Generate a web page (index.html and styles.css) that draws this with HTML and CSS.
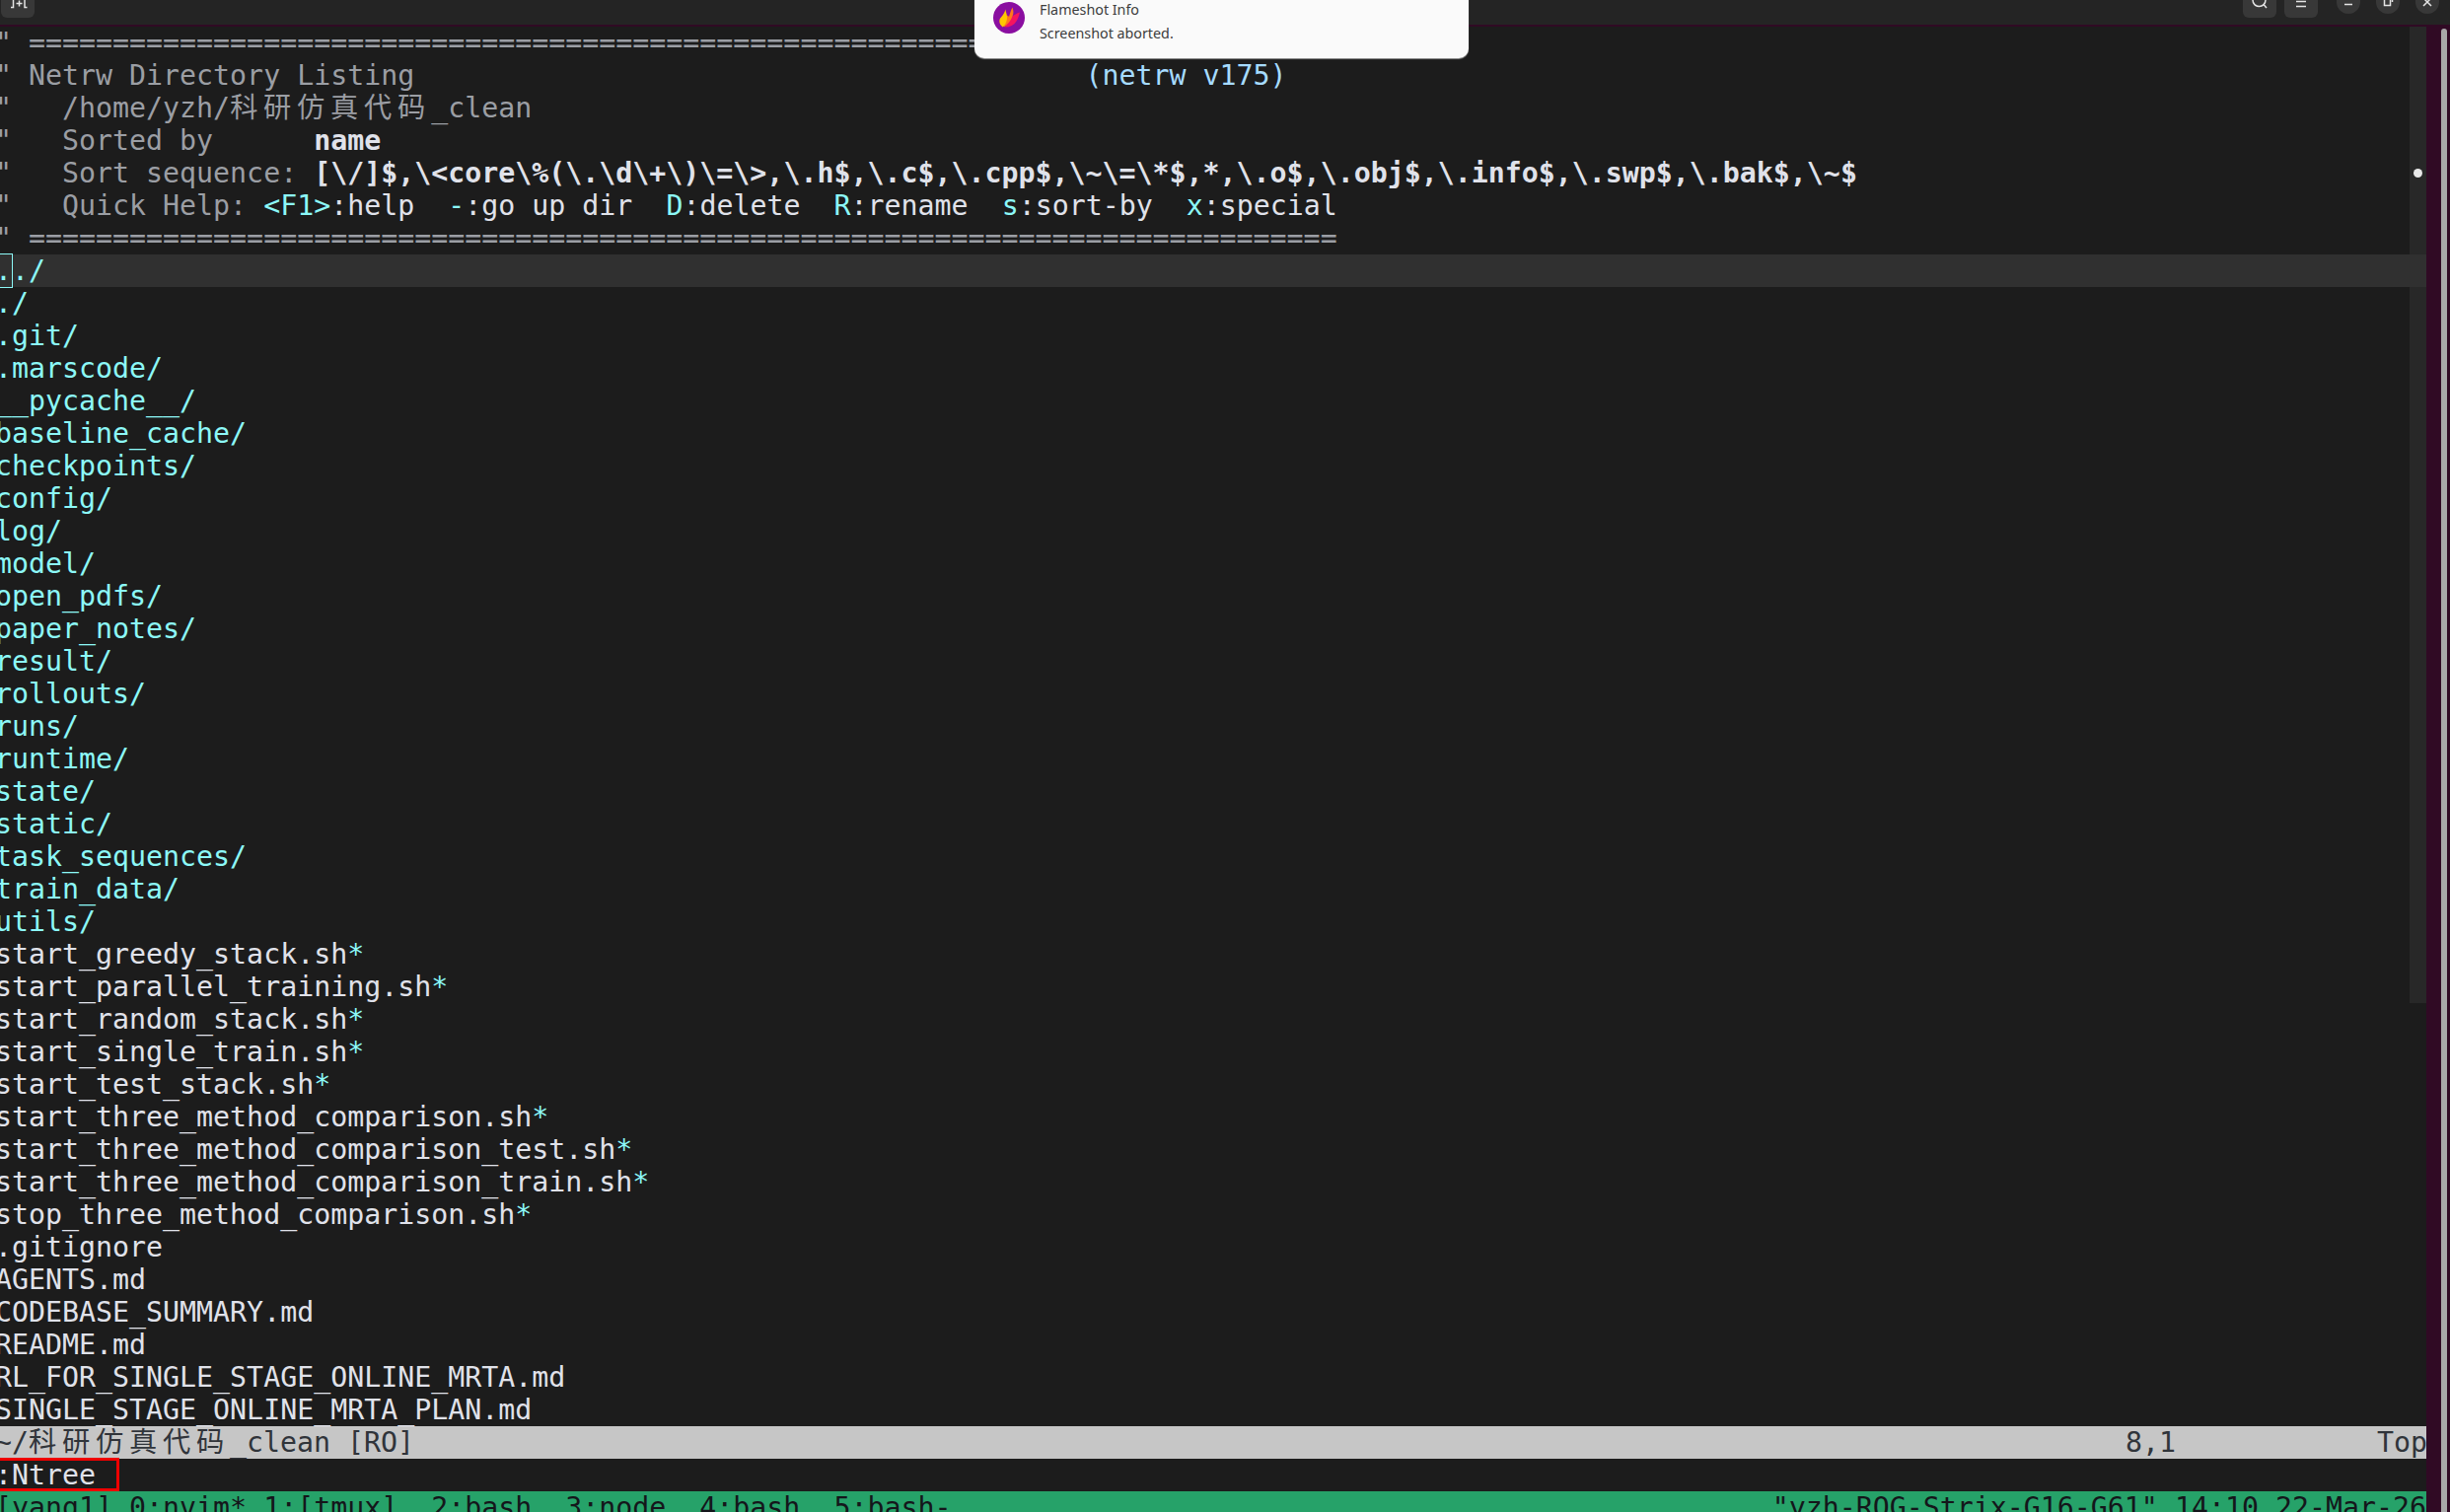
FILE: index.html
```html
<!DOCTYPE html>
<html lang="en">
<head>
<meta charset="utf-8">
<title>Netrw</title>
<link rel="stylesheet" href="styles.css">
</head>
<body>
<div class="window">
  <header class="titlebar">
    <div class="hb-btn tab-btn">
      <svg class="hb-icon" viewBox="0 0 34 18"><path d="M10 7.500h2.500V-1M15.500 3.500h6M18.500 .5v6M26.500 7.500H24V-1"/></svg>
    </div>
    <div class="title-actions">
      <div class="hb-btn">
        <svg class="hb-icon" viewBox="0 0 34 18"><circle cx="16.500" cy="0" r="6.500"/><path d="M21 4.500l3 3.500"/></svg>
      </div>
      <div class="hb-btn">
        <svg class="hb-icon" viewBox="0 0 34 18"><path d="M12 1.500h10M12 6.500h10"/></svg>
      </div>
      <div class="win-btns">
        <div class="win-btn"><svg class="hb-icon" viewBox="0 0 24 14"><path d="M8 4.500h8"/></svg></div>
        <div class="win-btn"><svg class="hb-icon" viewBox="0 0 24 14"><path d="M8.500-1v6.500h6V-1M16.500-1v3"/></svg></div>
        <div class="win-btn"><svg class="hb-icon" viewBox="0 0 24 14"><path d="M8-2l8 8M16-2L8 6"/></svg></div>
      </div>
    </div>
  </header>
  <main class="workspace">
    <section class="terminal">
      <div class="minimap"><span class="minimap-dot"></span></div>
      <div class="term-lines">
<div class="ln c-cm">" ==============================================================================</div>
<div class="ln c-cm">" Netrw Directory Listing                                        <span class="c-bl">(netrw v175)</span></div>
<div class="ln c-cm">"   /home/yzh/<span class="cjk">科研仿真代码</span>_clean</div>
<div class="ln c-cm">"   Sorted by      <b class="c-tx">name</b></div>
<div class="ln c-cm">"   Sort sequence: <b class="c-tx">[\/]$,\&lt;core\%(\.\d\+\)\=\&gt;,\.h$,\.c$,\.cpp$,\~\=\*$,*,\.o$,\.obj$,\.info$,\.swp$,\.bak$,\~$</b></div>
<div class="ln c-cm">"   Quick Help: <span class="c-cy">&lt;F1&gt;</span><span class="c-tx">:help</span>  <span class="c-cy">-</span><span class="c-tx">:go up dir</span>  <span class="c-cy">D</span><span class="c-tx">:delete</span>  <span class="c-cy">R</span><span class="c-tx">:rename</span>  <span class="c-cy">s</span><span class="c-tx">:sort-by</span>  <span class="c-cy">x</span><span class="c-tx">:special</span></div>
<div class="ln c-cm">" ==============================================================================</div>
<div class="ln c-cy cursorline"><span class="cursor">.</span>./</div>
<div class="ln c-cy">./</div>
<div class="ln c-cy">.git/</div>
<div class="ln c-cy">.marscode/</div>
<div class="ln c-cy">__pycache__/</div>
<div class="ln c-cy">baseline_cache/</div>
<div class="ln c-cy">checkpoints/</div>
<div class="ln c-cy">config/</div>
<div class="ln c-cy">log/</div>
<div class="ln c-cy">model/</div>
<div class="ln c-cy">open_pdfs/</div>
<div class="ln c-cy">paper_notes/</div>
<div class="ln c-cy">result/</div>
<div class="ln c-cy">rollouts/</div>
<div class="ln c-cy">runs/</div>
<div class="ln c-cy">runtime/</div>
<div class="ln c-cy">state/</div>
<div class="ln c-cy">static/</div>
<div class="ln c-cy">task_sequences/</div>
<div class="ln c-cy">train_data/</div>
<div class="ln c-cy">utils/</div>
<div class="ln c-tx">start_greedy_stack.sh<span class="c-cy">*</span></div>
<div class="ln c-tx">start_parallel_training.sh<span class="c-cy">*</span></div>
<div class="ln c-tx">start_random_stack.sh<span class="c-cy">*</span></div>
<div class="ln c-tx">start_single_train.sh<span class="c-cy">*</span></div>
<div class="ln c-tx">start_test_stack.sh<span class="c-cy">*</span></div>
<div class="ln c-tx">start_three_method_comparison.sh<span class="c-cy">*</span></div>
<div class="ln c-tx">start_three_method_comparison_test.sh<span class="c-cy">*</span></div>
<div class="ln c-tx">start_three_method_comparison_train.sh<span class="c-cy">*</span></div>
<div class="ln c-tx">stop_three_method_comparison.sh<span class="c-cy">*</span></div>
<div class="ln c-tx">.gitignore</div>
<div class="ln c-tx">AGENTS.md</div>
<div class="ln c-tx">CODEBASE_SUMMARY.md</div>
<div class="ln c-tx">README.md</div>
<div class="ln c-tx">RL_FOR_SINGLE_STAGE_ONLINE_MRTA.md</div>
<div class="ln c-tx">SINGLE_STAGE_ONLINE_MRTA_PLAN.md</div>
<div class="ln statusline">~/<span class="cjk">科研仿真代码</span>_clean [RO]                                                                                                      8,1            Top</div>
<div class="ln c-tx">:Ntree</div>
<div class="ln tmux"><span>[yang1] 0:nvim* 1:[tmux]  2:bash  3:node  4:bash  5:bash-</span><span>"yzh-ROG-Strix-G16-G61" 14:10 22-Mar-26</span></div>
      </div>
      <div class="cmd-mark"></div>
    </section>
    <aside class="desktop-edge"><div class="edge-scroll"></div></aside>
  </main>
  <div class="toast">
    <svg class="toast-icon" viewBox="0 0 32 32">
      <circle cx="16" cy="16" r="16" fill="#8a0ea0"/>
      <path d="M27 10.500c-1 3-1.500 6-3.500 9-2.500 4-6.500 6-11.500 6 1-4 3-7 6-10 3-2.500 6-4 9-5z" fill="#f5145f"/>
      <path d="M19.500 5.500c1 3 1.500 6 0 9-1.500 4-4.500 8-8.500 11-1-3-1-6 1-9 1.500-1 2-2 2.500-3 1 .5 1 1 1.500 1.500 1-3.500 2-7 3.500-9.500z" fill="#ff7a1a"/>
      <path d="M12.300 7.500c.5 3 2.500 6 1.500 10.500-.5 3-2 6-4 7.500-2-1.500-3.500-3.500-3.500-6 0-2 1-3.500 2.500-5 1.500-2 3-4 3.500-7z" fill="#ffc800"/>
    </svg>
    <div class="toast-body">
      <div class="toast-title">Flameshot Info</div>
      <div class="toast-text">Screenshot aborted.</div>
    </div>
  </div>
</div>
</body>
</html>
```
FILE: styles.css
```css
* { box-sizing: border-box; }
html, body { margin: 0; padding: 0; height: 100%; overflow: hidden; background: #300a24; }
.window { position: relative; width: 2484px; height: 1533px; overflow: hidden; display: flex; flex-direction: column; }

.titlebar { flex: 0 0 25px; background: #242424; display: flex; justify-content: space-between; align-items: flex-start; overflow: hidden; }
.title-actions { display: flex; align-items: flex-start; gap: 8px; margin-right: 11px; }
.hb-btn { width: 34px; height: 18px; background: #383838; border-radius: 0 0 6px 6px; display: flex; overflow: hidden; }
.tab-btn { margin-left: 1px; }
.hb-icon { width: 100%; height: 100%; fill: none; stroke: #e4e4e4; stroke-width: 1.5; overflow: visible; }
.win-btns { display: flex; gap: 16px; margin-left: 11px; }
.win-btn { width: 24px; height: 14px; background: #383838; border-radius: 0 0 12px 12px; display: flex; overflow: hidden; }

.workspace { flex: 1; min-height: 0; display: flex; border-top: 2px solid #300a24; }
.terminal { position: relative; flex: 1; min-width: 0; background: #1c1c1c; overflow: hidden; }
.term-lines { position: relative; margin-left: -5px; font-family: "DejaVu Sans Mono", "Noto Sans CJK SC", monospace; font-size: 28.25px; line-height: 33px; }
.ln { height: 33px; white-space: pre; }
.ln b { font-weight: 700; }
.cjk { letter-spacing: 5.75px; }
.c-cm { color: #9b9ea4; }
.c-tx { color: #e0e2ea; }
.c-cy { color: #8cf8f7; }
.c-bl { color: #a6dbff; }
.cursorline { background: #303030; margin-left: 5px; text-indent: -5px; }
.cursor { outline: 1px solid #8cf8f7; display: inline-block; height: 33px; width: 17px; vertical-align: top; text-indent: 0; }
.statusline { background: #c6c6c6; color: #30343a; }
.tmux { background: #26a269; color: #14161b; display: flex; justify-content: space-between; }

.minimap { position: absolute; top: 0; right: 0; width: 17px; height: 990px; background: #282828; }
.minimap-dot { position: absolute; left: 4px; top: 144px; width: 9px; height: 9px; border-radius: 50%; background: #e8e8e8; }
.cmd-mark { position: absolute; left: -3px; top: 1451px; width: 124px; height: 34px; border: 3px solid #ee0000; }

.desktop-edge { flex: 0 0 24px; background: #300a24; padding: 2px 3px 0 15px; }
.edge-scroll { height: 100%; background: #a8a8a8; border-radius: 3px 3px 0 0; }

.toast { position: absolute; left: 988px; top: -10px; width: 501px; height: 69px; background: #fafafa; border-radius: 0 0 10px 10px; box-shadow: 0 1px 1px #9a9a9a; display: flex; padding: 12px 0 0 19px; gap: 15px; font-family: "Noto Sans", sans-serif; color: #3d3d3d; }
.toast-icon { width: 32px; height: 32px; flex: none; }
.toast-body { display: flex; flex-direction: column; gap: 7px; margin-top: -1px; }
.toast-title { font-size: 14.3px; line-height: 17px; }
.toast-text { font-size: 14.3px; line-height: 17px; }
```
